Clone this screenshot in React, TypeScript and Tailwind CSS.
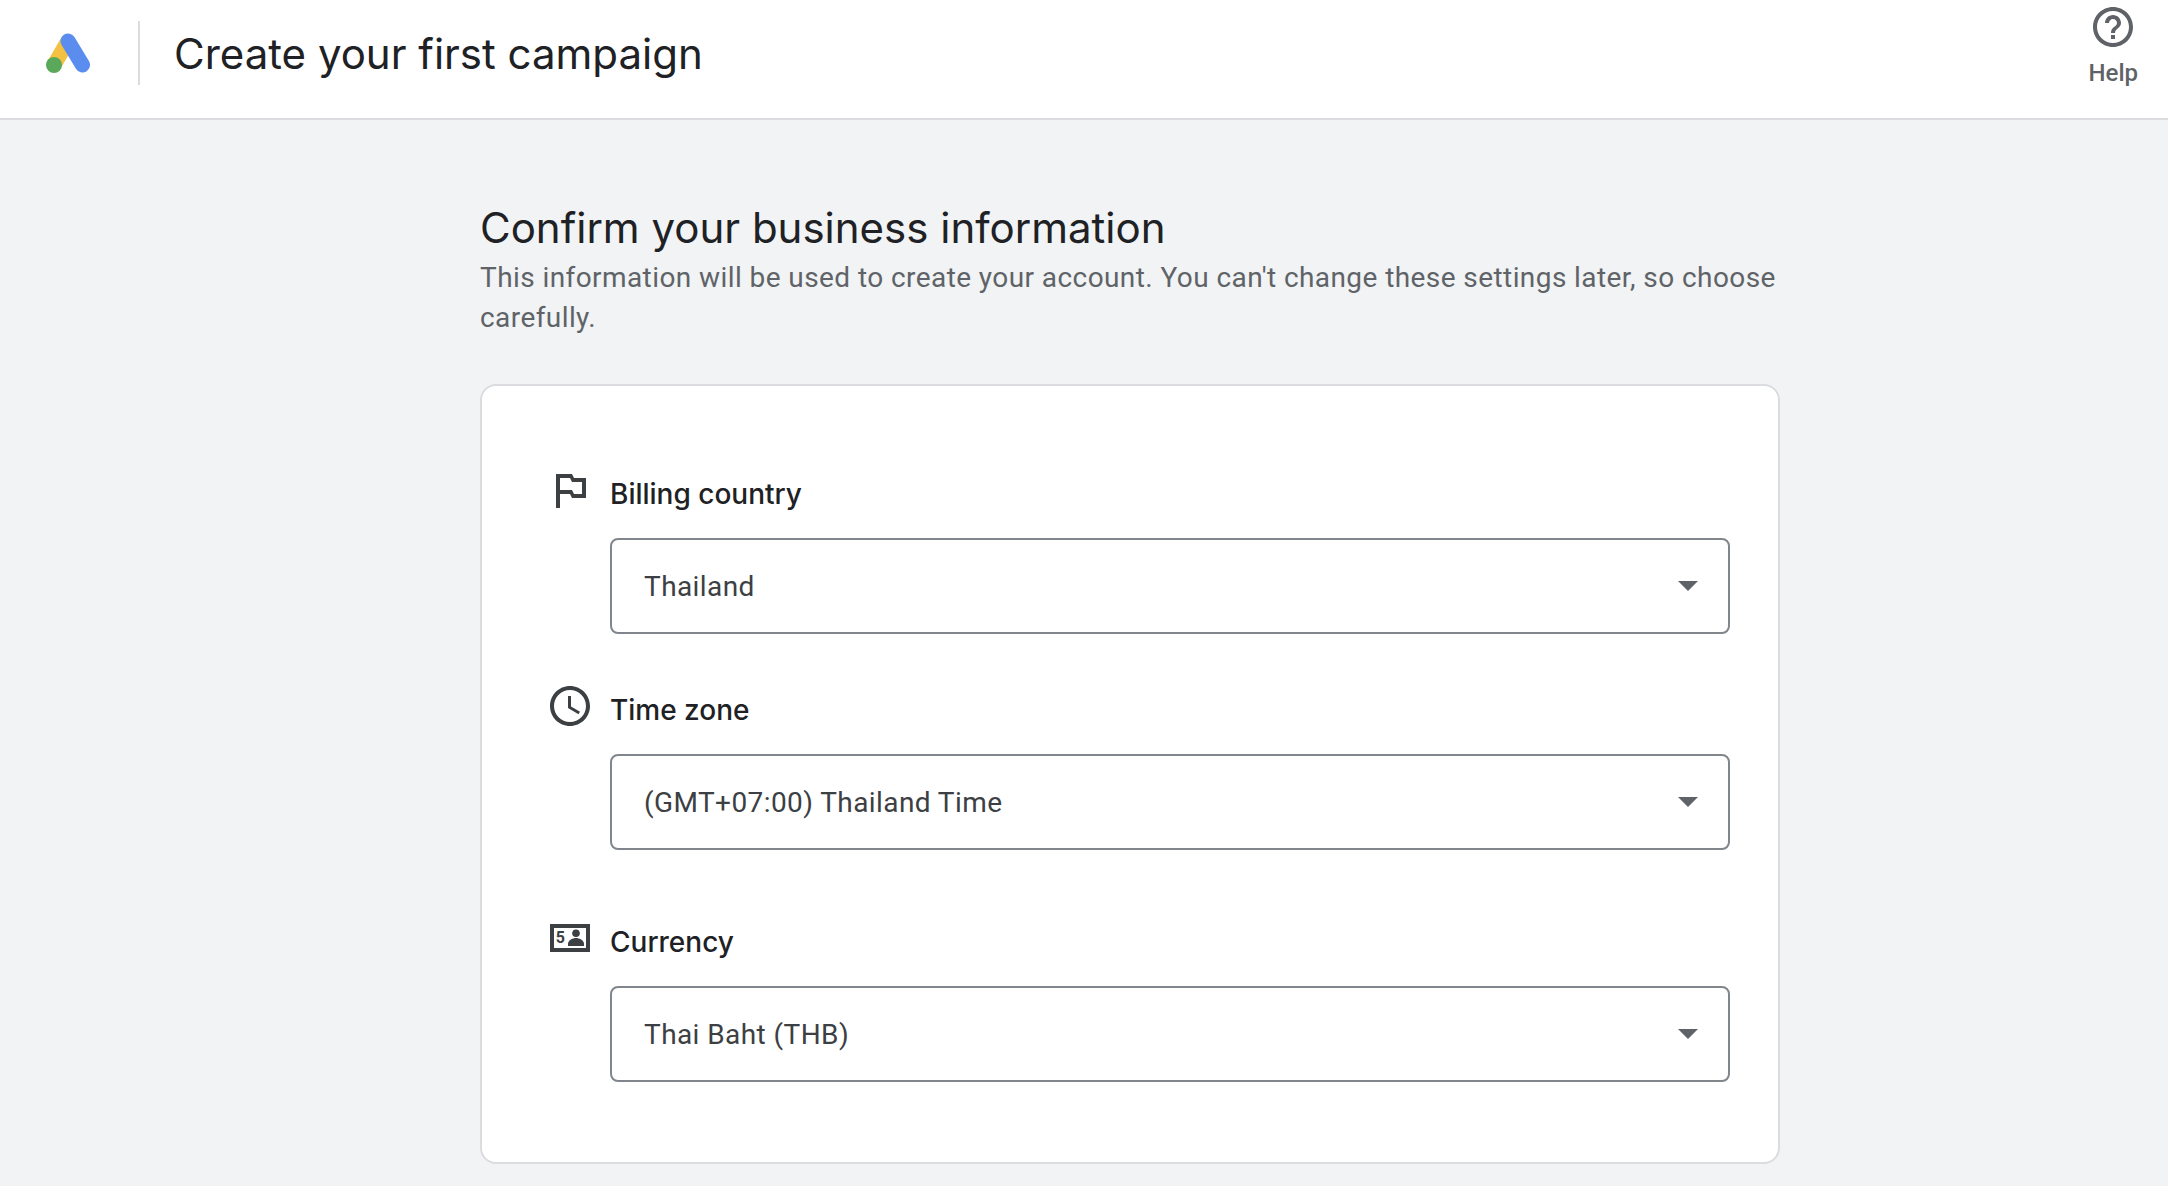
const sans = "font-['Inter',sans-serif]";
const roboto = "font-['Roboto',sans-serif]";

function Logo() {
  return (
    <svg viewBox="0 0 48 44" className="h-11 w-12">
      <path d="M24 10 L10 34" stroke="#f4c142" strokeWidth="15" fill="none" />
      <path d="M24 10 L38.5 34" stroke="#5b8def" strokeWidth="15" strokeLinecap="round" fill="none" />
      <circle cx="10" cy="34" r="8" fill="#5aa85a" />
    </svg>
  );
}

function FlagIcon() {
  return (
    <svg viewBox="0 0 24 24" className="-mt-2 size-12 shrink-0" fill="#3c4043">
      <path d="M14 6l-1-2H5v17h2v-7h5l1 2h7V6h-6zm4 8h-4l-1-2H7V6h5l1 2h5v6z" />
    </svg>
  );
}

function ClockIcon() {
  return (
    <svg viewBox="0 0 24 24" className="-mt-2 size-12 shrink-0" fill="#3c4043">
      <path d="M11.99 2C6.47 2 2 6.48 2 12s4.47 10 9.99 10C17.52 22 22 17.52 22 12S17.52 2 11.99 2zM12 20c-4.42 0-8-3.58-8-8s3.58-8 8-8 8 3.58 8 8-3.58 8-8 8zm.5-13H11v6l5.25 3.15.75-1.23-4.5-2.67z" />
    </svg>
  );
}

function CurrencyIcon() {
  return (
    <svg viewBox="0 0 24 24" className="-mt-2 size-12 shrink-0" fill="#3c4043">
      <path fillRule="evenodd" d="M2 5h20v14H2zM4 7v10h16V7z" />
      <text x="4.9" y="14.3" fontSize="8" fontWeight="700" fontFamily="Roboto, sans-serif">5</text>
      <circle cx="15" cy="9.6" r="1.9" />
      <path d="M11 16v-1c0-2 2.5-3 4-3s4 1 4 3v1z" />
    </svg>
  );
}

function Field({ icon, name, value, className }: { icon: React.ReactNode; name: string; value: string; className?: string }) {
  return (
    <div className={`flex gap-4 ${className ?? ""}`}>
      {icon}
      <div className="flex-1">
        <div className={`mb-6 h-10 text-[28px] leading-10 font-medium text-[#202124] ${sans}`}>{name}</div>
        <div className="flex h-24 items-center justify-between rounded-lg border-2 border-[#80868b] bg-white pr-7.5 pl-8">
          <span className={`pt-0.5 text-[28px] tracking-[.015em] text-[#3c4043] ${roboto}`}>{value}</span>
          <svg viewBox="0 0 20 10" className="h-2.5 w-5" fill="#5f6368">
            <path d="M0 0h20L10 10z" />
          </svg>
        </div>
      </div>
    </div>
  );
}

export default function App() {
  return (
    <div className="min-h-screen overflow-hidden bg-[#f1f3f4]">
      <header className="flex h-30 items-center border-b-2 border-[#dadce0] bg-white pb-3 pl-11">
        <Logo />
        <div className="ml-11.5 h-16 w-0.5 bg-[#dadce0]" />
        <h1 className={`ml-8.5 text-[42px] font-normal text-[#202124] ${sans}`}>Create your first campaign</h1>
        <div className={`mr-7.5 ml-auto flex -translate-y-2 flex-col items-center text-[#5f6368] ${roboto}`}>
          <svg viewBox="0 0 24 24" className="size-12" fill="#5f6368">
            <path d="M11 18h2v-2h-2v2zm1-16C6.48 2 2 6.48 2 12s4.48 10 10 10 10-4.48 10-10S17.52 2 12 2zm0 18c-4.41 0-8-3.59-8-8s3.59-8 8-8 8 3.59 8 8-3.59 8-8 8zm0-14c-2.21 0-4 1.79-4 4h2c0-1.1.9-2 2-2s2 .9 2 2c0 2-3 1.75-3 5h2c0-2.25 3-2.5 3-5 0-2.21-1.79-4-4-4z" />
          </svg>
          <span className="mt-2 text-2xl leading-7 font-medium">Help</span>
        </div>
      </header>
      <main className="pt-21 pl-120">
        <h2 className={`text-[42px] leading-12 font-normal text-[#202124] ${sans}`}>Confirm your business information</h2>
        <p className={`mt-1.5 w-[1300px] text-[28px] leading-10 tracking-[.015em] text-[#5f6368] ${roboto}`}>
          This information will be used to create your account. You can't change these settings later, so choose carefully.
        </p>
        <section className="mt-11.5 w-[1300px] rounded-2xl border-2 border-[#dadce0] bg-white pt-22 pr-12 pb-20 pl-16">
          <Field icon={<FlagIcon />} name="Billing country" value="Thailand" />
          <Field className="mt-14" icon={<ClockIcon />} name="Time zone" value="(GMT+07:00) Thailand Time" />
          <Field className="mt-18" icon={<CurrencyIcon />} name="Currency" value="Thai Baht (THB)" />
        </section>
      </main>
    </div>
  );
}
